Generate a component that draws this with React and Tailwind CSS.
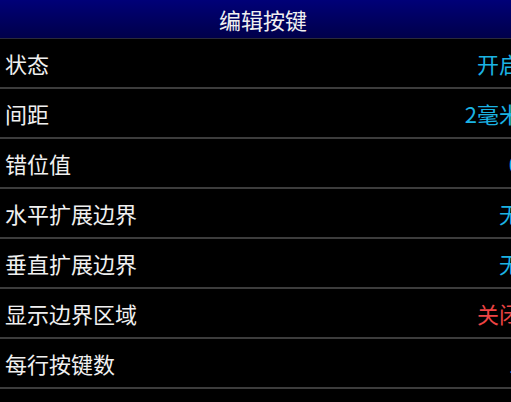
import React from "react";

const rows = [
  { label: "状态", value: "开启", color: "text-[#1bb3e3]" },
  { label: "间距", value: "2毫米", color: "text-[#1bb3e3]" },
  { label: "错位值", value: "0", color: "text-[#1bb3e3]" },
  { label: "水平扩展边界", value: "无", color: "text-[#1bb3e3]" },
  { label: "垂直扩展边界", value: "无", color: "text-[#1bb3e3]" },
  { label: "显示边界区域", value: "关闭", color: "text-[#ee4444]" },
  { label: "每行按键数", value: "1", color: "text-[#1bb3e3]" },
  { label: "按键不透明度", value: "100%", color: "text-[#1bb3e3]" },
];

export default function App() {
  return (
    <div
      className="w-[511px] h-[402px] overflow-hidden bg-black"
      style={{ fontFamily: '"Noto Sans CJK SC", "Noto Sans", sans-serif' }}
    >
      <div className="w-[526px]">
        <div className="h-[38px] flex items-center justify-center bg-gradient-to-b from-[#000078] to-[#00004a] text-[#f0f0f0] text-[22px] leading-none">
          编辑按键
        </div>
        <div className="h-px bg-[#2a2a3a]" />
        {rows.map((r) => (
          <div key={r.label}>
            <div className="h-[48px] flex items-center justify-between px-[5px] text-[22px] leading-none">
              <span className="text-[#f0f0f0]">{r.label}</span>
              <span className={r.color}>{r.value}</span>
            </div>
            <div className="h-[2px] bg-[#3c3c3c]" />
          </div>
        ))}
      </div>
    </div>
  );
}
